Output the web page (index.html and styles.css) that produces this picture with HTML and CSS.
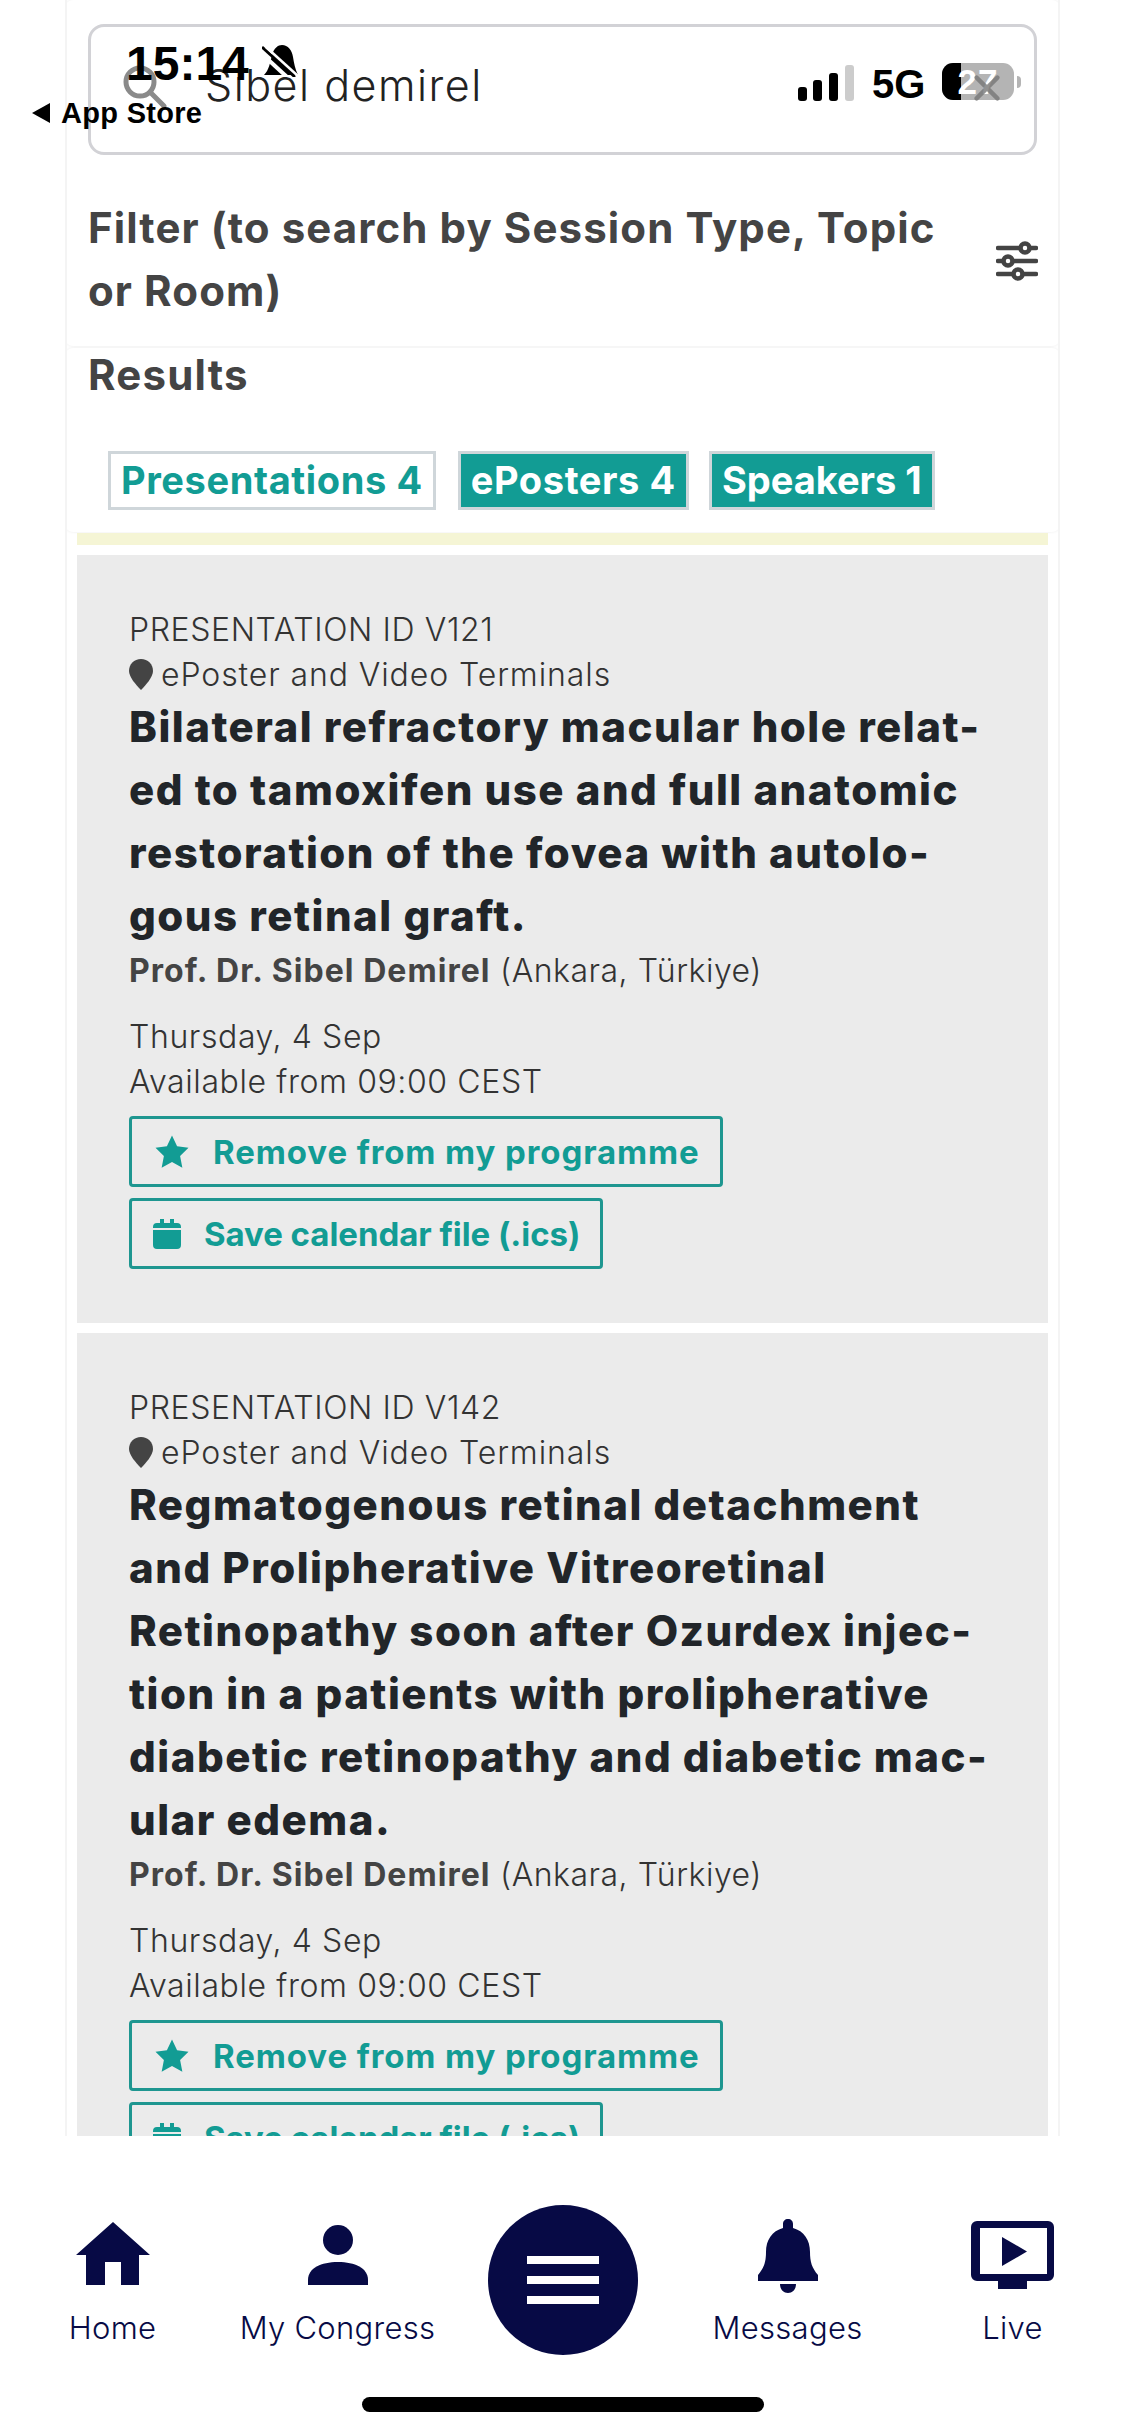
FILE: index.html
```html
<!DOCTYPE html>
<html lang="en">
<head>
<meta charset="utf-8">
<title>Search results</title>
<link rel="stylesheet" href="styles.css">
</head>
<body>
<div class="screen">
  <main class="content">
    <section class="panel panel-search">
      <div class="searchbox">
        <svg class="search-icon" viewBox="0 0 44 44"><circle cx="17" cy="17" r="14" fill="none" stroke="#8a8a8a" stroke-width="5"/><path d="M27 27l14 14" stroke="#8a8a8a" stroke-width="5" stroke-linecap="round"/></svg>
        <span class="search-text">Sibel demirel</span>
        <svg class="clear-icon" viewBox="0 0 30 30"><path d="M3 3l24 24M27 3L3 27" stroke="#777" stroke-width="5" stroke-linecap="round"/></svg>
      </div>
      <div class="filter">
        <h2 class="filter-title">Filter (to search by Session Type, Topic<br>or Room)</h2>
        <svg class="filter-icon" viewBox="0 0 42 40"><g fill="none" stroke="#444" stroke-width="4.500" stroke-linecap="round"><path d="M2 7h22M35 7h5M2 20h5M18 20h22M2 33h15M28 33h12"/><circle cx="29" cy="7" r="4.500"/><circle cx="12" cy="20" r="4.500"/><circle cx="22" cy="33" r="4.500"/></g></svg>
      </div>
    </section>
    <section class="panel panel-results">
      <h2 class="results-title">Results</h2>
      <div class="tabs">
        <span class="tab tab-active">Presentations 4</span>
        <span class="tab">ePosters 4</span>
        <span class="tab tab-speakers">Speakers 1</span>
      </div>
    </section>
    <div class="strip"></div>
    <article class="card">
      <p class="meta">PRESENTATION ID V121</p>
      <p class="meta place"><svg class="pin" viewBox="0 0 24 31"><path d="M12 0C5 0 0 5 0 12c0 6 7 14 12 19 5-5 12-13 12-19C24 5 19 0 12 0z" fill="#444"/></svg>ePoster and Video Terminals</p>
      <h3 class="title">Bilateral refractory macular hole relat-<br>ed to tamoxifen use and full anatomic<br>restoration of the fovea with autolo-<br>gous retinal graft.</h3>
      <p class="speaker"><b>Prof. Dr. Sibel Demirel</b> (Ankara, Türkiye)</p>
      <p class="meta date">Thursday, 4 Sep</p>
      <p class="meta">Available from 09:00 CEST</p>
      <div class="actions">
        <a class="btn btn-star"><svg class="btn-icon" viewBox="0 0 24 24"><path d="M12 1l3.4 7.2 7.6 1-5.6 5.4 1.5 7.9-6.9-3.9-6.9 3.9 1.5-7.9L1 9.200l7.600-1z" fill="#129c94"/></svg>Remove from my programme</a>
        <a class="btn btn-cal"><svg class="btn-icon cal" viewBox="0 0 28 30"><path d="M0 11h28v15a4 4 0 0 1-4 4H4a4 4 0 0 1-4-4zM4 4h3V0h4v4h6V0h4v4h3a4 4 0 0 1 4 4v1H0V8a4 4 0 0 1 4-4z" fill="#129c94"/></svg>Save calendar file (.ics)</a>
      </div>
    </article>
    <article class="card">
      <p class="meta">PRESENTATION ID V142</p>
      <p class="meta place"><svg class="pin" viewBox="0 0 24 31"><path d="M12 0C5 0 0 5 0 12c0 6 7 14 12 19 5-5 12-13 12-19C24 5 19 0 12 0z" fill="#444"/></svg>ePoster and Video Terminals</p>
      <h3 class="title">Regmatogenous retinal detachment<br>and Prolipherative Vitreoretinal<br>Retinopathy soon after Ozurdex injec-<br>tion in a patients with prolipherative<br>diabetic retinopathy and diabetic mac-<br>ular edema.</h3>
      <p class="speaker"><b>Prof. Dr. Sibel Demirel</b> (Ankara, Türkiye)</p>
      <p class="meta date">Thursday, 4 Sep</p>
      <p class="meta">Available from 09:00 CEST</p>
      <div class="actions">
        <a class="btn btn-star"><svg class="btn-icon" viewBox="0 0 24 24"><path d="M12 1l3.4 7.2 7.6 1-5.6 5.4 1.5 7.9-6.9-3.9-6.9 3.9 1.5-7.9L1 9.200l7.600-1z" fill="#129c94"/></svg>Remove from my programme</a>
        <a class="btn btn-cal"><svg class="btn-icon cal" viewBox="0 0 28 30"><path d="M0 11h28v15a4 4 0 0 1-4 4H4a4 4 0 0 1-4-4zM4 4h3V0h4v4h6V0h4v4h3a4 4 0 0 1 4 4v1H0V8a4 4 0 0 1 4-4z" fill="#129c94"/></svg>Save calendar file (.ics)</a>
      </div>
    </article>
  </main>
  <nav class="tabbar">
    <a class="nav-item"><svg class="nav-icon" viewBox="0 0 74 64"><path d="M37 0l37 33H63v30H45V40H29v23H10V33H0z" fill="#070a45"/></svg><span>Home</span></a>
    <a class="nav-item"><svg class="nav-icon" viewBox="0 0 74 64"><circle cx="37" cy="18" r="15" fill="#070a45"/><path d="M7 63v-5C7 46 20 40 37 40s30 6 30 18v5z" fill="#070a45"/></svg><span>My Congress</span></a>
    <a class="nav-menu" aria-label="Menu"><i></i><i></i><i></i></a>
    <a class="nav-item"><svg class="nav-icon bell" viewBox="0 0 60 74"><path d="M30 0c3 0 5 2 5 5v4c11 3 17 12 17 24 0 10 2 16 8 23v6H0v-6c6-7 8-13 8-23C8 21 14 12 25 9V5c0-3 2-5 5-5zM22 65h16c0 5-3 9-8 9s-8-4-8-9z" fill="#070a45"/></svg><span>Messages</span></a>
    <a class="nav-item"><svg class="nav-icon live" viewBox="0 0 83 68"><path d="M6 0h71a6 6 0 0 1 6 6v48a6 6 0 0 1-6 6H56v8H27v-8H6a6 6 0 0 1-6-6V6a6 6 0 0 1 6-6zm3 7v46h67V7z" fill="#070a45"/><path d="M31 16l25 14.500L31 45z" fill="#070a45"/></svg><span>Live</span></a>
  </nav>
  <div class="home-indicator"></div>
  <div class="status">
    <span class="time">15:14</span>
    <svg class="mute" viewBox="0 0 36 32"><path d="M2 30C7 25 8 18 10 10 12 3 16 0 20 0c6 0 10 5 11 12 1 6 2 12 5 18z" fill="#000"/><path d="M0 9l25 23" stroke="#fff" stroke-width="4"/><path d="M0 2l33 30" stroke="#000" stroke-width="3"/><path d="M4 2l32 29" stroke="#fff" stroke-width="2.500"/></svg>
    <span class="back"><svg class="back-arrow" viewBox="0 0 18 20"><path d="M18 0v20L0 10z" fill="#000"/></svg>App Store</span>
    <svg class="signal" viewBox="0 0 56 36"><rect x="0" y="22" width="9" height="14" rx="3"/><rect x="15" y="15" width="9" height="21" rx="3"/><rect x="31" y="8" width="9" height="28" rx="3"/><rect x="47" y="0" width="9" height="36" rx="3" fill="#ccc"/></svg>
    <span class="net">5G</span>
    <span class="battery"><span class="battery-level"></span><span class="battery-num">27</span></span>
    <span class="battery-cap"></span>
  </div>
</div>
</body>
</html>
```
FILE: styles.css
```css
* { box-sizing: border-box; }
html, body { margin: 0; padding: 0; }
body { background: #fff; font-family: Inter, "Liberation Sans", sans-serif; color: #444; }
p, h2, h3 { margin: 0; }
.screen { position: relative; width: 1125px; height: 2436px; overflow: hidden; display: flex; flex-direction: column; background: #fff; }

.content { height: 2136px; overflow: hidden; flex: none; margin: 0 65px; padding: 0 10px; border-left: 2px solid #f4f4f4; border-right: 2px solid #f4f4f4; }
.panel { margin: 0 -12px; background: #fff; padding: 0 23px; border-radius: 8px; box-shadow: 0 0 3px rgba(0,0,0,.08); }
.panel-search { height: 346px; padding-top: 24px; }
.panel-results { height: 184px; margin-top: 2px; padding-top: 1px; }
.searchbox { height: 131px; border: 3px solid #d2d2d6; border-radius: 16px; display: flex; align-items: center; padding: 0 0 10px 114px; }
.search-icon { position: absolute; left: 123px; top: 65px; width: 44px; height: 44px; }
.search-text { font-size: 43px; font-weight: 300; color: #222; letter-spacing: 1.500px; }
.clear-icon { position: absolute; left: 974px; top: 75px; width: 26px; height: 26px; z-index: 2; opacity: .8; }
.filter { display: flex; align-items: center; justify-content: space-between; margin-top: 41px; }
.filter-title { font-size: 42px; line-height: 63px; font-weight: 700; color: #444; letter-spacing: 1.100px; }
.filter-icon { width: 42px; height: 40px; margin: 3px -1px 0 0; }
.results-title { font-size: 42px; line-height: 52px; font-weight: 700; color: #444; letter-spacing: 1.200px; }
.tabs { display: flex; gap: 22px; padding-left: 20px; margin-top: 50px; }
.tab { height: 59px; line-height: 53px; border: 3px solid #cfd6da; background: #129c94; color: #fff; font-size: 38px; font-weight: 700; padding: 0 10px; letter-spacing: .6px; white-space: nowrap; }
.tab-active { background: #fff; color: #129c94; }
.tab-speakers { letter-spacing: 0; margin-left: -2px; }
.strip { height: 12px; margin-top: 1px; background: #f5f5d5; }
.card { background: #ebebeb; margin-top: 10px; padding: 52px 52px 50px; height: 768px; }
.card + .card { height: auto; margin-top: 10px; }
.meta { font-size: 32px; line-height: 45px; font-weight: 300; color: #333; letter-spacing: .6px; white-space: nowrap; }
.place { display: flex; align-items: center; letter-spacing: .9px; }
.pin { width: 24px; height: 31px; margin-right: 8px; }
.title { font-size: 42px; line-height: 63px; font-weight: 800; color: #212529; letter-spacing: 1.500px; white-space: nowrap; margin: -2px 0 1px; }
.speaker { font-size: 32px; line-height: 45px; font-weight: 300; color: #333; letter-spacing: .5px; margin-bottom: 21px; }
.speaker b { font-weight: 700; color: #444; letter-spacing: 1.050px; }
.actions { display: flex; flex-direction: column; align-items: flex-start; gap: 11px; margin-top: 12px; }
.btn { height: 71px; border: 3px solid #1e9690; border-radius: 4px; display: flex; align-items: center; color: #129c94; font-size: 33px; font-weight: 700; letter-spacing: .9px; white-space: nowrap; }
.btn-star { width: 594px; padding-left: 22px; }
.btn-cal { width: 474px; padding-left: 21px; letter-spacing: -.05px; }
.btn-icon { width: 36px; height: 36px; margin-right: 23px; flex: none; }
.btn-icon.cal { width: 28px; height: 30px; margin-right: 23px; }

.tabbar { flex: 1; display: grid; grid-template-columns: repeat(5, 1fr); padding-top: 83px; align-items: start; }
.nav-item { display: flex; flex-direction: column; align-items: center; color: #070a45; font-size: 31px; font-weight: 300; letter-spacing: .3px; line-height: 40px; }
.nav-icon { width: 74px; height: 64px; margin-bottom: 22px; margin-top: 3px; }
.nav-icon.bell { width: 60px; height: 74px; margin-top: 0; margin-bottom: 15px; }
.nav-icon.live { width: 83px; height: 68px; margin-top: 2px; margin-bottom: 19px; }
.nav-menu { justify-self: center; margin-top: -14px; width: 150px; height: 150px; border-radius: 50%; background: #070a45; display: flex; flex-direction: column; align-items: center; justify-content: center; gap: 12px; }
.nav-menu i { display: block; width: 72px; height: 8px; background: #fff; }
.home-indicator { position: absolute; left: 362px; top: 2397px; width: 402px; height: 15px; background: #000; border-radius: 8px; }

.status { position: absolute; inset: 0 0 auto 0; height: 150px; font-family: "Liberation Sans", sans-serif; color: #000; font-weight: 700; }
.time { position: absolute; left: 126px; top: 37px; font-size: 48px; line-height: 54px; }
.mute { position: absolute; left: 262px; top: 45px; width: 36px; height: 32px; }
.back { position: absolute; left: 32px; top: 97px; font-size: 29px; line-height: 32px; letter-spacing: .3px; display: flex; align-items: center; gap: 11px; }
.back-arrow { width: 18px; height: 20px; }
.signal { position: absolute; left: 798px; top: 65px; width: 56px; height: 36px; fill: #000; }
.net { position: absolute; left: 872px; top: 64px; font-size: 40px; line-height: 40px; }
.battery { position: absolute; left: 942px; top: 63px; width: 72px; height: 37px; border-radius: 11px; background: #b4b4b4; overflow: hidden; text-align: center; }
.battery-level { position: absolute; left: 0; top: 0; bottom: 0; width: 19px; background: #000; }
.battery-num { position: relative; color: #fff; font-size: 35px; line-height: 37px; letter-spacing: 1px; }
.battery-cap { position: absolute; left: 1017px; top: 76px; width: 4px; height: 12px; background: #b4b4b4; border-radius: 0 4px 4px 0; }
```
